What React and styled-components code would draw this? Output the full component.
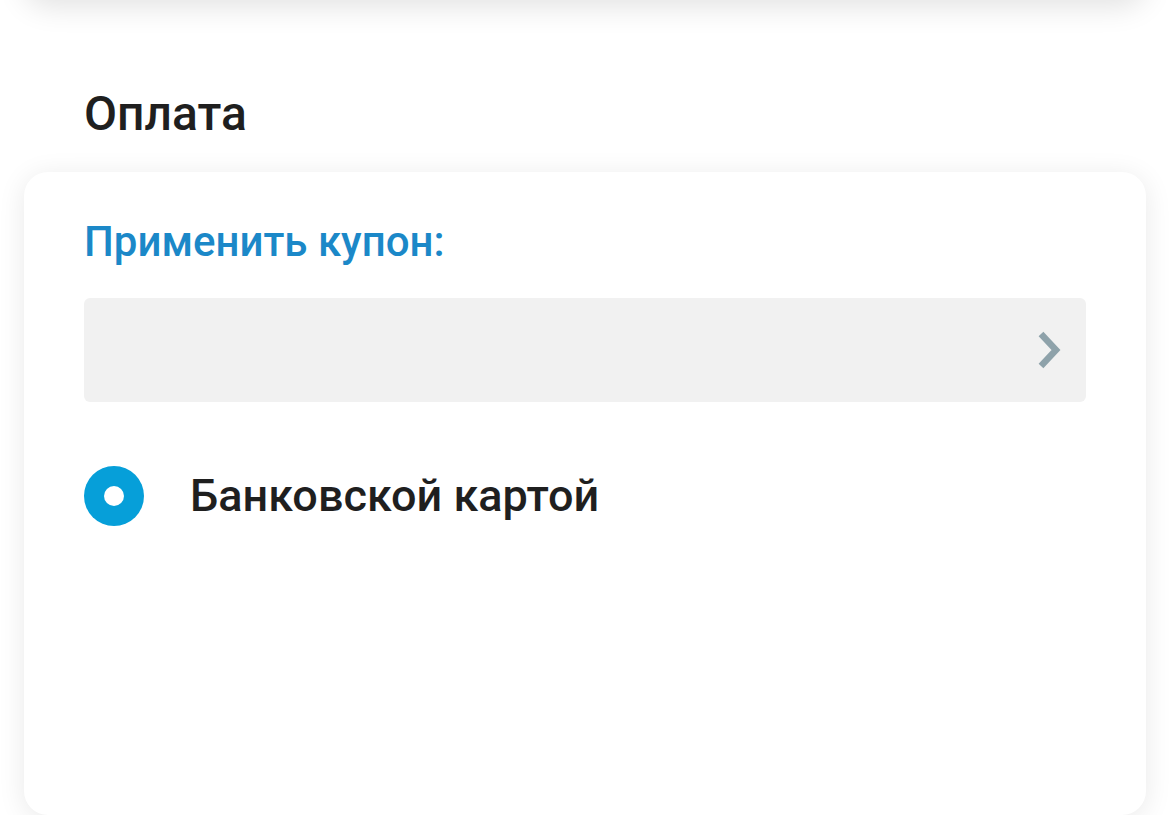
import React from "react";
import styled, { createGlobalStyle } from "styled-components";

const Global = createGlobalStyle`
  html, body { margin: 0; padding: 0; background: #ffffff; }
  body { font-family: Roboto, "Noto Sans", Arial, sans-serif; overflow: hidden; }
  * { box-sizing: border-box; }
`;

const Page = styled.div`
  width: 1170px;
  height: 815px;
  overflow: hidden;
  background: #ffffff;
  display: flex;
  flex-direction: column;
`;

const HeaderEdge = styled.div`
  height: 40px;
  margin: -40px 24px 0;
  background: #ffffff;
  border-radius: 0 0 24px 24px;
  box-shadow: 0 6px 30px rgba(0, 0, 0, 0.12);
  flex-shrink: 0;
`;

const SectionTitle = styled.h2`
  margin: 84px 0 0 84px;
  font-size: 48px;
  font-weight: 500;
  line-height: 60px;
  color: #1f1f1f;
`;

const Card = styled.section`
  margin: 28px 24px 0;
  background: #ffffff;
  border-radius: 24px;
  box-shadow: 0 4px 28px rgba(0, 0, 0, 0.09);
  padding: 46px 60px 0;
  height: 643px;
  flex-shrink: 0;
  display: flex;
  flex-direction: column;
`;

const CouponLabel = styled.div`
  font-size: 42px;
  font-weight: 500;
  line-height: 48px;
  color: #1b88c8;
`;

const CouponInput = styled.div`
  margin-top: 32px;
  height: 104px;
  background: #f1f1f1;
  border-radius: 6px;
  display: flex;
  align-items: center;
  justify-content: flex-end;
  padding-right: 22px;
`;

const Option = styled.label`
  margin-top: 64px;
  display: flex;
  align-items: center;
  gap: 46px;
`;

const Radio = styled.span`
  width: 60px;
  height: 60px;
  border-radius: 50%;
  background: ${(p) => (p.checked ? "#069fd9" : "#ffffff")};
  display: flex;
  align-items: center;
  justify-content: center;
  &::after {
    content: "";
    width: 20px;
    height: 20px;
    border-radius: 50%;
    background: #ffffff;
  }
`;

const OptionText = styled.span`
  font-size: 45px;
  font-weight: 500;
  line-height: 60px;
  color: #1f1f1f;
`;

export default function App() {
  return (
    <Page>
      <Global />
      <HeaderEdge />
      <SectionTitle>Оплата</SectionTitle>
      <Card>
        <CouponLabel>Применить купон:</CouponLabel>
        <CouponInput>
          <svg width="30" height="38" viewBox="0 0 30 38" fill="none">
            <path d="M7 3 L22 19 L7 35" stroke="#8ea2aa" strokeWidth="6.5" strokeLinecap="butt" strokeLinejoin="miter" />
          </svg>
        </CouponInput>
        <Option>
          <Radio checked />
          <OptionText>Банковской картой</OptionText>
        </Option>
      </Card>
    </Page>
  );
}
